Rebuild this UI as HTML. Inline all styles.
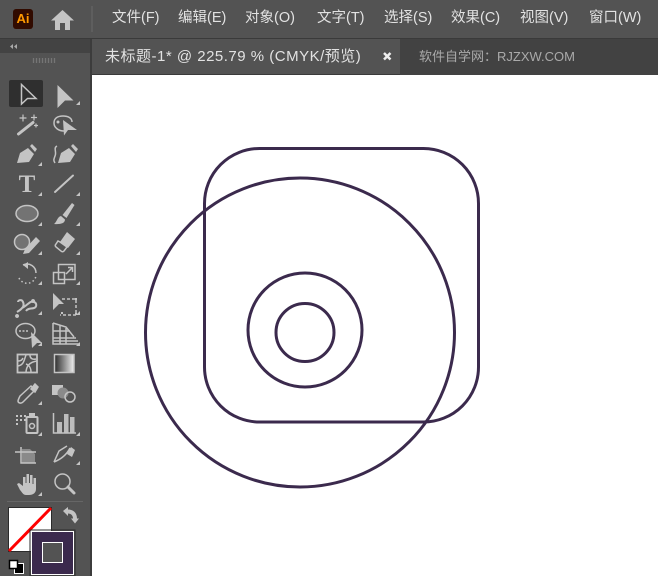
<!DOCTYPE html>
<html><head><meta charset="utf-8"><style>
html,body{margin:0;padding:0;background:#fff}
#p{position:relative;width:658px;height:576px;overflow:hidden;background:#fff;font-family:"Liberation Sans","Noto Sans CJK SC",sans-serif}
.b{position:absolute}
.m{position:absolute;top:8px;height:20px;line-height:20px;font-size:14.5px;color:#e2e2e2;white-space:nowrap}
</style></head><body><div id="p">
<div class="b" style="left:0;top:0;width:658px;height:38px;background:#535353"></div>
<div class="b" style="left:0;top:38px;width:658px;height:1px;background:#3a3a3a"></div>
<div class="b" style="left:92px;top:39px;width:566px;height:36px;background:#424242"></div>
<div class="b" style="left:92px;top:39px;width:308px;height:35px;background:#535353"></div>
<div class="b" style="left:92px;top:74px;width:308px;height:1px;background:#3a3a3a"></div>
<div class="b" style="left:0;top:39px;width:90px;height:14px;background:#434343"></div>
<div class="b" style="left:0;top:53px;width:90px;height:523px;background:#535353"></div>
<div class="b" style="left:90px;top:39px;width:2px;height:537px;background:#3c3c3c"></div>
<div class="b" style="left:13px;top:9px;width:20px;height:20px;background:#310b00;border-radius:3px;color:#ff9a00;font:bold 13px/20px 'Liberation Sans',sans-serif;text-align:center">Ai</div>
<div class="b" style="left:91px;top:6px;width:2px;height:26px;background:#5e5e5e"></div>
<div class="m" style="left:112px">文件(F)</div>
<div class="m" style="left:178px">编辑(E)</div>
<div class="m" style="left:245px">对象(O)</div>
<div class="m" style="left:317px">文字(T)</div>
<div class="m" style="left:384px">选择(S)</div>
<div class="m" style="left:451px">效果(C)</div>
<div class="m" style="left:520px">视图(V)</div>
<div class="m" style="left:589px">窗口(W)</div>
<div class="m" style="left:105px;top:47px;font-size:15px;letter-spacing:.5px">未标题-1* @ 225.79 % (CMYK/预览)</div>
<div class="m" style="left:419px;top:47px;color:#aaa;font-size:13px">软件自学网：RJZXW.COM</div>
<svg class="b" style="left:0;top:0" width="658" height="576" viewBox="0 0 658 576">
<!-- artwork -->
<g fill="none" stroke="#3b2a4d" stroke-width="3">
<rect x="204.500" y="148.500" width="274" height="273.500" rx="55"/>
<circle cx="300" cy="332.500" r="154.500"/>
<circle cx="305" cy="330" r="57"/>
<circle cx="305" cy="332.500" r="29"/>
</g>
<!-- top -->
<path d="M62.500 10L74 20.500H70V30H65V23H60V30H55V20.500H51Z" fill="#c4c4c4"/>
<path d="M384 53l6.500 6.500M390.500 53L384 59.500" stroke="#eee" stroke-width="2.500" fill="none"/>
<path d="M13 44l-3 2.500 3 2.500zM17 44l-3 2.500 3 2.500z" fill="#aaa"/>
<path d="M33.500 58v5M36.500 58v5M39.500 58v5M42.500 58v5M45.500 58v5M48.500 58v5M51.500 58v5M54.500 58v5" stroke="#757575" stroke-width="1.300"/>
<rect x="9" y="80" width="34" height="27" rx="2" fill="#2f2f2f"/>
<g style="filter:blur(.35px)">
<!-- corner triangles -->
<path d="M80 101v4h-4zM42 162v4h-4zM42 192v4h-4zM80 192v4h-4zM42 222v4h-4zM80 222v4h-4zM42 251v4h-4zM80 251v4h-4zM42 281v4h-4zM80 281v4h-4zM42 311v4h-4zM80 311v4h-4zM42 342v4h-4zM80 342v4h-4zM42 401v4h-4zM42 432v4h-4zM80 432v4h-4zM80 461v4h-4zM42 492v4h-4z" fill="#c4c4c4"/>
<g fill="#c4c4c4" stroke="none">
<!-- black arrow -->
<path d="M57.500 85L73.500 100.500H65L57.500 108Z"/>
<!-- pen -->
<path d="M17 163l3-10 8-5 6 6-5 8zM30 146l2-2 5 5-2 3z"/>
<!-- anchor pen -->
<path d="M58 163l3-10 8-5 6 6-5 8zM71 146l2-2 5 5-2 3z"/>
<!-- brush -->
<path d="M72 203l2.500 2-8 13-4-3zM61 216l4 3.500c0 4-5 5-11 4.500 3-2 3-7 7-8z"/>
<!-- eraser -->
<path d="M67 232l8 7-7 9-8-6z"/>
<!-- shaper circle -->
<circle cx="22" cy="242" r="7.500" fill="#737373" stroke="#c4c4c4" stroke-width="1.500"/>
<path d="M25 249l11-12 4 4-11 12-6 1z"/>
<!-- free transform arrow -->
<path d="M53 293l11 11h-5l-6 6z"/>
<!-- shape builder arrow -->
<path d="M31 332l11 11h-5l-5 5z"/>
<!-- hand -->
<path d="M17 484l2-1 4 3v-9h2.500v6h1v-9h2.500v9h1v-8h2.500v9h1v-6h2.500v11c0 4-3 6-7 6h-3c-3 0-4-3-6-5z"/>
<!-- slice tip -->
<path d="M71 447l4 3-3 7-5-3z"/>
<!-- bars -->
<path d="M57 422h5v10.500h-5zM64 414h4.500v18.500H64zM70 417h4.500v15.500H70z" fill="#bcbcbc"/>
<!-- blend -->
<path d="M52 385h11v10H52z"/>
<circle cx="63" cy="393" r="5.500" fill="#8a8a8a"/>
<!-- sprayer dots -->
<path d="M16 415h2v2h-2zM20 415h2v2h-2zM24 415h2v2h-2zM16 419h2v2h-2zM20 419h2v2h-2zM24 419h2v2h-2zM16 423h2v2h-2z"/>
<path d="M29 413h6v4h-6z"/>
<!-- artboard -->
<path d="M22 449h8l5 5v9H22z" fill="#8a8a8a"/>
<!-- swap -->
<path d="M63 511l5-4v2.500c5 0 9 3 9 9H79l-4 5-4-5h2c0-3-2-5-5-5v2.500z"/>
</g>
<g fill="none" stroke="#c4c4c4" stroke-width="1.500">
<!-- selection -->
<path d="M21.500 84.500L36 98.500H27.500L21.500 104Z"/>
<!-- lasso -->
<path d="M64 131c-5 0-10-3-10-8 0-5 4-7 9-7 5 0 9 2 9 6"/>
<!-- anchor pen tail -->
<path d="M57 146c-4 2 0 6-2 10-1 3-2 4 0 7"/>
<!-- ellipse -->
<ellipse cx="27" cy="213.500" rx="11" ry="8" fill="#737373"/>
<!-- eraser tail -->
<path d="M60 242l7 5-3 4c-1 1-2 1-3 0l-5-4c-1-1-1-2 0-3l2-3z"/>
<!-- rotate -->
<path d="M23 265c7-3 13 2 13 8"/>
<path d="M19 278a9 9 0 0 0 17-2" stroke-dasharray="1.500 2.500"/>
<!-- scale -->
<rect x="58.500" y="264.500" width="16.500" height="15"/>
<rect x="53.500" y="272.500" width="11" height="11"/>
<path d="M66 274l6-6M68 267.500h4.500V272"/>
<!-- width -->
<path d="M17 312c5-3 8-6 6-10-1-3-5-2-5 0M22 308c5-2 8-8 12-6 3 1 3 5 0 6-3 1-6 0-8 3" stroke-width="2"/>
<!-- free transform -->
<path d="M62 299h14v16H60" stroke-dasharray="3 2"/>
<!-- builder -->
<ellipse cx="25.500" cy="331" rx="9.500" ry="7.500"/>
<path d="M19 331h9" stroke-dasharray="2 1.500"/>
<!-- perspective -->
<path d="M53 323l13 4 8 10v0M53 323v21h27M53 331h17M53 338h23M53 341h25M60 325v19M66 328v16"/>
<!-- mesh -->
<rect x="17.500" y="354.500" width="19.500" height="18" stroke-width="1.800"/>
<path d="M18 366c6-1 6-6 8-11M37 361c-7 1-11 5-11 12M26 364c3 1 5 4 5 8M23 358c-1 2-2 3-5 3M30 355c0 3 2 5 6 4"/>
<!-- eyedropper -->
<path d="M20 396l11-10 4 4-12 12c-2 2-5 1-5-1 0-1 1-3 2-5z"/>
<path d="M31 389l4-5 3 3-3 5z" fill="#c4c4c4"/>
<circle cx="70" cy="397" r="5"/>
<!-- sprayer -->
<rect x="26.500" y="417" width="11" height="16" rx="1" stroke-width="2"/>
<circle cx="32" cy="426" r="2.500"/>
<!-- graph -->
<path d="M53.500 413v20H76"/>
<!-- artboard -->
<path d="M21 447v16H36M15 452h21"/>
<!-- slice -->
<path d="M54 462c5-2 12-6 16-14M54 462l5-11 8-5"/>
<!-- zoom -->
<circle cx="62.500" cy="481.500" r="7.500"/>
</g>
<g fill="none" stroke="#c4c4c4" stroke-linecap="round">
<path d="M18.500 134L33 122.500" stroke-width="3"/>
<path d="M55 192L73 175.500" stroke-width="2"/>
<path d="M68 487l6 6" stroke-width="3"/>
<path d="M23 115v6M20 118h6M34 115v5M31.500 117.500h5M36 124v3M34.500 125.500h3" stroke-width="1.200"/>
</g>
<text x="27" y="192" text-anchor="middle" font-family="Liberation Serif" font-weight="bold" font-size="25" fill="#c4c4c4">T</text>
<path d="M23 265l5-3v7z" fill="#c4c4c4"/>
<path d="M61 312h2v2h-2zM75 298h2v2h-2zM75 313h2v2h-2z" fill="#c4c4c4"/>
<path d="M17 314a2 2 0 1 0 .1 0zM33 299a2 2 0 1 0 .1 0z" fill="#c4c4c4"/>
<path d="M63 120L77 130H68L64 135.500Z" fill="#c4c4c4"/>
<circle cx="58" cy="122" r="1.500" fill="#c4c4c4"/>
<!-- gradient -->
<defs><linearGradient id="g"><stop offset="0" stop-color="#2c2c2c"/><stop offset="1" stop-color="#f0f0f0"/></linearGradient></defs>
<rect x="54.500" y="354.500" width="19.500" height="18" fill="url(#g)" stroke="#c4c4c4" stroke-width="1.500"/>
</g>
<!-- divider -->
<path d="M7 501.500H83" stroke="#666"/>
<!-- fill -->
<rect x="8.500" y="507.500" width="43" height="44" fill="#fff" stroke="#2b2b2b"/>
<path d="M9 551L51 508" stroke="#f00" stroke-width="3"/>
<!-- stroke -->
<rect x="31" y="531" width="43" height="44" fill="#fff"/>
<rect x="30" y="530" width="45" height="46" fill="none" stroke="#2b2b2b"/>
<rect x="32" y="532" width="41" height="42" fill="#3b2a4d"/>
<rect x="42.500" y="542.500" width="20" height="20" fill="#535353" stroke="#fff"/>
<!-- default -->
<rect x="14.500" y="563.500" width="9" height="10" fill="#000" stroke="#fff"/>
<rect x="9.500" y="560.500" width="8" height="8" fill="#fff" stroke="#000" stroke-width="1.500"/>
</svg>
</div></body></html>
